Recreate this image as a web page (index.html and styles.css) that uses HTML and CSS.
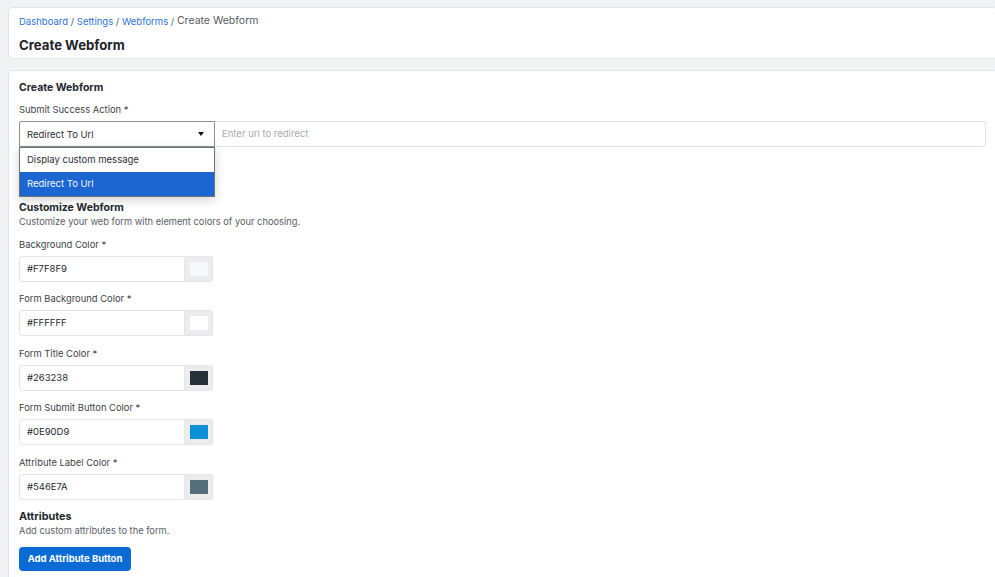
FILE: index.html
```html
<!DOCTYPE html>
<html lang="en">
<head>
<meta charset="utf-8">
<title>Create Webform</title>
<link rel="stylesheet" href="styles.css">
</head>
<body>
<div class="page">
  <header class="card head-card">
    <nav class="crumbs">
      <a href="#">Dashboard</a> / <a href="#">Settings</a> / <a href="#">Webforms</a> / <span class="crumb-current">Create Webform</span>
    </nav>
    <h1 class="page-title">Create Webform</h1>
  </header>

  <section class="card form-card">
    <h2 class="section-title">Create Webform</h2>
    <div class="field">
      <label class="label">Submit Success Action *</label>
      <div class="action-row">
        <div class="select-wrap">
          <div class="select">
            <span>Redirect To Url</span>
            <span class="caret"></span>
          </div>
          <ul class="dropdown">
            <li class="option">Display custom message</li>
            <li class="option selected">Redirect To Url</li>
          </ul>
        </div>
        <div class="url-input">Enter url to redirect</div>
      </div>
    </div>

    <h2 class="section-title customize">Customize Webform</h2>
    <p class="desc">Customize your web form with element colors of your choosing.</p>

    <div class="color-group">
      <label class="label">Background Color *</label>
      <div class="color-input"><span class="color-text">#F7F8F9</span><span class="swatch-box"><span class="swatch" style="background:#F7F8F9"></span></span></div>
    </div>
    <div class="color-group">
      <label class="label">Form Background Color *</label>
      <div class="color-input"><span class="color-text">#FFFFFF</span><span class="swatch-box"><span class="swatch" style="background:#FFFFFF"></span></span></div>
    </div>
    <div class="color-group">
      <label class="label">Form Title Color *</label>
      <div class="color-input"><span class="color-text">#263238</span><span class="swatch-box"><span class="swatch" style="background:#263238"></span></span></div>
    </div>
    <div class="color-group">
      <label class="label">Form Submit Button Color *</label>
      <div class="color-input"><span class="color-text">#0E90D9</span><span class="swatch-box"><span class="swatch" style="background:#0E90D9"></span></span></div>
    </div>
    <div class="color-group">
      <label class="label">Attribute Label Color *</label>
      <div class="color-input"><span class="color-text">#546E7A</span><span class="swatch-box"><span class="swatch" style="background:#546E7A"></span></span></div>
    </div>

    <h2 class="section-title attributes">Attributes</h2>
    <p class="desc">Add custom attributes to the form.</p>
    <button class="btn-primary">Add Attribute Button</button>
  </section>
</div>
</body>
</html>
```

FILE: styles.css
```css
html, body {
  margin: 0;
  padding: 0;
  overflow: hidden;
}
body {
  background: #f1f2f4;
  font-family: Inter, "Noto Sans", "Liberation Sans", sans-serif;
  color: #262a30;
}
.page {
  padding: 7px 0 0 8px;
  width: 990px;
}
.card {
  background: #fff;
  border: 1px solid #e1e3e7;
  border-radius: 5px;
}
.head-card {
  padding: 7px 10px 4px;
  height: 39px;
}
.crumbs {
  font-size: 9.5px;
  line-height: 14px;
  color: #555b63;
}
.crumbs a {
  color: #2b74d8;
  text-decoration: none;
}
.crumb-current {
  font-size: 10.5px;
  color: #555b63;
  position: relative;
  top: -1px;
}
.page-title {
  margin: 7px 0 0;
  font-size: 13.2px;
  line-height: 18px;
  font-weight: 700;
  color: #1f242a;
}
.form-card {
  margin-top: 11px;
  padding: 9px 10px 20px;
  min-height: 520px;
}
.section-title {
  margin: 0;
  font-size: 10.5px;
  line-height: 15px;
  font-weight: 700;
  color: #23282e;
}
.field {
  margin-top: 8px;
}
.label {
  display: block;
  font-size: 9.4px;
  line-height: 14px;
  color: #3d434a;
}
.action-row {
  display: flex;
  margin-top: 4px;
}
.select-wrap {
  position: relative;
  width: 196px;
  flex: none;
}
.select {
  box-sizing: border-box;
  height: 26px;
  border: 1px solid #8d9096;
  border-radius: 2px 0 0 0;
  display: flex;
  align-items: center;
  justify-content: space-between;
  padding: 0 9px 0 7px;
  font-size: 9.5px;
  color: #2a2f35;
}
.caret {
  width: 0;
  height: 0;
  border-left: 3.5px solid transparent;
  border-right: 3.5px solid transparent;
  border-top: 4px solid #111;
  margin-right: 1px;
}
.dropdown {
  position: absolute;
  left: 0;
  top: 26px;
  width: 196px;
  box-sizing: border-box;
  margin: 0;
  padding: 0;
  list-style: none;
  background: #fff;
  border: 1px solid #6f7378;
  box-shadow: 0 3px 10px rgba(0, 0, 0, 0.18);
  z-index: 5;
}
.option {
  height: 24px;
  line-height: 24px;
  padding-left: 7px;
  font-size: 9.5px;
  color: #2a2f35;
}
.option.selected {
  background: #1b66d1;
  color: #f2f6fd;
}
.url-input {
  flex: 1;
  box-sizing: border-box;
  height: 26px;
  border: 1px solid #e1e3e6;
  border-left: none;
  border-radius: 0 3px 3px 0;
  padding-left: 7px;
  line-height: 24px;
  font-size: 9.5px;
  color: #a6abb1;
  margin-right: 1px;
}
.customize {
  margin-top: 53px;
}
.desc {
  margin: 0;
  font-size: 9.3px;
  line-height: 13px;
  color: #5a6068;
}
.color-group {
  margin-top: 9.5px;
}
.color-group + .color-group {
  margin-top: 10.5px;
}
.color-input {
  display: flex;
  margin-top: 4px;
  width: 194px;
  height: 26px;
}
.color-text {
  box-sizing: border-box;
  width: 166px;
  height: 26px;
  border: 1px solid #e3e5e8;
  border-radius: 3px 0 0 3px;
  padding-left: 7px;
  line-height: 24px;
  font-size: 9.5px;
  color: #262a30;
}
.swatch-box {
  box-sizing: border-box;
  width: 28px;
  height: 26px;
  background: #ececee;
  border: 1px solid #e3e5e8;
  border-left: none;
  border-radius: 0 3px 3px 0;
  display: flex;
  align-items: center;
  justify-content: center;
}
.swatch {
  display: block;
  width: 18px;
  height: 14px;
}
.attributes {
  margin-top: 9.5px;
  font-size: 10.8px;
}
.btn-primary {
  display: block;
  margin-top: 9.5px;
  height: 24px;
  width: 112px;
  border: none;
  border-radius: 4px;
  background: #0b6bd4;
  color: #fff;
  font-family: inherit;
  font-size: 9.5px;
  font-weight: 700;
  padding: 0;
}
```
